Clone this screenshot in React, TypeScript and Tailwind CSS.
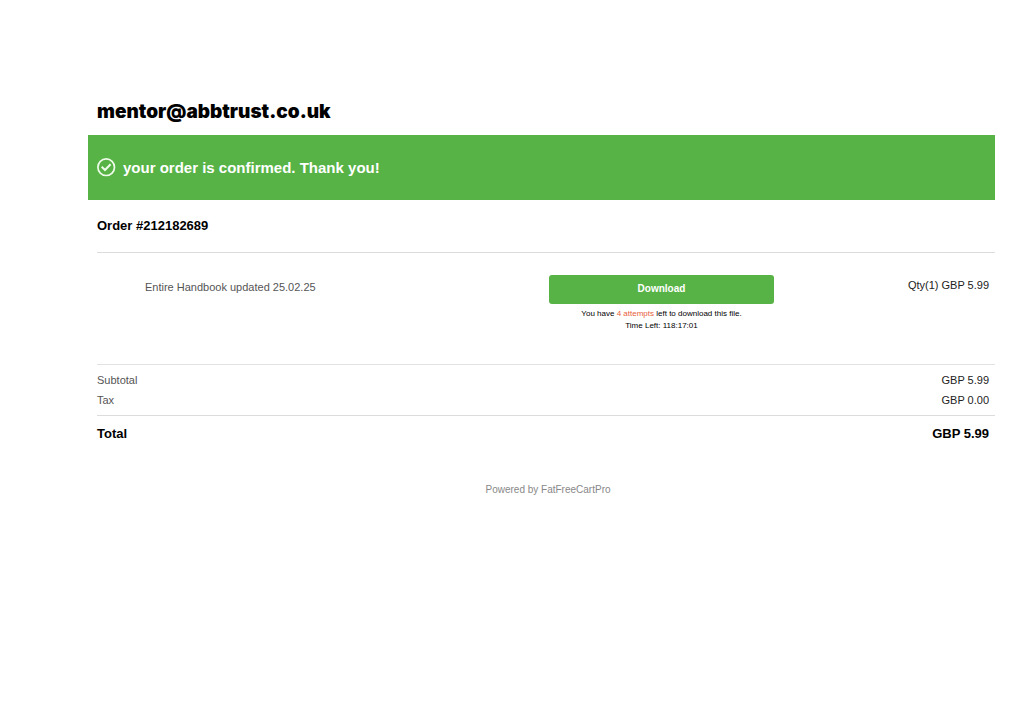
import React from "react";

interface OrderLine {
  label: string;
  value: string;
}

const lines: OrderLine[] = [
  { label: "Subtotal", value: "GBP 5.99" },
  { label: "Tax", value: "GBP 0.00" },
];

const CheckIcon: React.FC = () => (
  <svg
    className="w-5 h-5 shrink-0"
    viewBox="0 0 20 20"
    fill="none"
    stroke="#effbea"
    aria-hidden="true"
  >
    <circle cx="10.2" cy="9.2" r="8.3" strokeWidth="1.7" />
    <path d="M5.7 8.8l3.3 3.2 5.6-5.8" strokeWidth="2" />
  </svg>
);

const App: React.FC = () => {
  return (
    <main className="min-h-screen bg-white pt-24 pb-8 pl-[88px] pr-[29px] font-['Liberation_Sans',Arial,sans-serif] text-black">
      <h1 className="h-[39px] pl-[9px] font-['Inter','Arial_Black',sans-serif] text-[19px] leading-8 font-black">
        mentor@abbtrust.co.uk
      </h1>

      <div className="flex items-center gap-[7px] bg-[#57b345] py-[22px] pl-2 text-white">
        <CheckIcon />
        <p className="text-[15px] leading-[21px] font-bold">
          your order is confirmed. Thank you!
        </p>
      </div>

      <div className="pl-[9px]">
        <h2 className="border-b border-[#dcdcdc] py-4 text-[13px] leading-5 font-bold">
          Order #212182689
        </h2>

        <section className="grid grid-cols-[452fr_225fr_221fr] border-b border-[#e2e2e2] pt-[22px] pb-8">
          <p className="pt-1 pl-12 text-[11px] leading-4 text-[#555]">
            Entire Handbook updated 25.02.25
          </p>
          <div className="text-center text-[8px] leading-3">
            <button
              type="button"
              className="mb-1 h-[29px] w-full rounded-[3px] bg-[#57b345] pb-[2px] text-[10px] font-bold text-white"
            >
              Download
            </button>
            <p>
              You have <span className="text-[#e8603c]">4 attempts</span> left
              to download this file.
            </p>
            <p>Time Left: 118:17:01</p>
          </div>
          <p className="pt-[2px] pr-[6px] text-right text-[11px] leading-4 text-[#222]">
            Qty(1) GBP 5.99
          </p>
        </section>

        <dl className="border-b border-[#dcdcdc] pt-[5px] pb-[5px] text-[11px] leading-5">
          {lines.map((line) => (
            <div key={line.label} className="flex justify-between pr-[6px]">
              <dt className="text-[#555]">{line.label}</dt>
              <dd className="text-[#222]">{line.value}</dd>
            </div>
          ))}
        </dl>

        <div className="flex justify-between pt-2 pr-[6px] text-[13px] leading-5 font-bold">
          <span>Total</span>
          <span>GBP 5.99</span>
        </div>

        <footer className="pt-9 pl-1 text-center text-[10px] leading-5 text-[#888]">
          Powered by FatFreeCartPro
        </footer>
      </div>
    </main>
  );
};

export default App;
